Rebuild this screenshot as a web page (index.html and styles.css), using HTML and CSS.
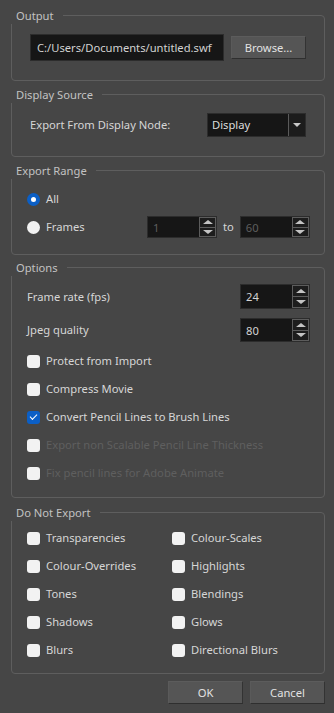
FILE: index.html
```html
<!DOCTYPE html>
<html>
<head>
<meta charset="utf-8">
<link rel="stylesheet" href="styles.css">
</head>
<body>
<div class="dialog">
  <section class="group g-output">
    <div class="title">Output</div>
    <div class="row">
      <div class="field path">C:/Users/Documents/untitled.swf</div>
      <div class="btn browse">Browse...</div>
    </div>
  </section>

  <section class="group g-source">
    <div class="title">Display Source</div>
    <div class="row between">
      <span class="label">Export From Display Node:</span>
      <div class="combo"><span class="combo-val">Display</span><span class="combo-arrow"></span></div>
    </div>
  </section>

  <section class="group g-range">
    <div class="title">Export Range</div>
    <div class="rrow">
      <span class="radio on"></span><span class="label">All</span>
    </div>
    <div class="rrow">
      <span class="radio"></span><span class="label frames-label">Frames</span>
      <div class="spin small disabled"><span class="spin-val">1</span><span class="spin-btns"><span class="sb up"></span><span class="sb down"></span></span></div>
      <span class="label to">to</span>
      <div class="spin small disabled"><span class="spin-val">60</span><span class="spin-btns"><span class="sb up"></span><span class="sb down"></span></span></div>
    </div>
  </section>

  <section class="group g-options">
    <div class="title">Options</div>
    <div class="orow r1">
      <span class="label">Frame rate (fps)</span>
      <div class="spin tall"><span class="spin-val">24</span><span class="spin-btns"><span class="sb up"></span><span class="sb down"></span></span></div>
    </div>
    <div class="orow r2">
      <span class="label">Jpeg quality</span>
      <div class="spin"><span class="spin-val">80</span><span class="spin-btns"><span class="sb up"></span><span class="sb down"></span></span></div>
    </div>
    <div class="checks">
      <div class="crow"><span class="cb"></span><span class="label">Protect from Import</span></div>
      <div class="crow"><span class="cb"></span><span class="label">Compress Movie</span></div>
      <div class="crow"><span class="cb on"></span><span class="label">Convert Pencil Lines to Brush Lines</span></div>
      <div class="crow dis"><span class="cb"></span><span class="label">Export non Scalable Pencil Line Thickness</span></div>
      <div class="crow dis"><span class="cb"></span><span class="label">Fix pencil lines for Adobe Animate</span></div>
    </div>
  </section>

  <section class="group g-dne">
    <div class="title">Do Not Export</div>
    <div class="grid">
      <div class="crow"><span class="cb"></span><span class="label">Transparencies</span></div>
      <div class="crow"><span class="cb"></span><span class="label">Colour-Scales</span></div>
      <div class="crow"><span class="cb"></span><span class="label">Colour-Overrides</span></div>
      <div class="crow"><span class="cb"></span><span class="label">Highlights</span></div>
      <div class="crow"><span class="cb"></span><span class="label">Tones</span></div>
      <div class="crow"><span class="cb"></span><span class="label">Blendings</span></div>
      <div class="crow"><span class="cb"></span><span class="label">Shadows</span></div>
      <div class="crow"><span class="cb"></span><span class="label">Glows</span></div>
      <div class="crow"><span class="cb"></span><span class="label">Blurs</span></div>
      <div class="crow"><span class="cb"></span><span class="label">Directional Blurs</span></div>
    </div>
  </section>

  <div class="buttons">
    <div class="btn">OK</div>
    <div class="btn">Cancel</div>
  </div>
</div>
</body>
</html>
```

FILE: styles.css
```css
html, body {
  margin: 0;
  padding: 0;
  background: #464646;
}
body {
  width: 334px;
  height: 713px;
  overflow: hidden;
  font-family: "Noto Sans", "Open Sans", sans-serif;
  font-size: 11.2px;
  color: #d6d6d6;
}
.dialog {
  padding: 15px 9px 0 11px;
  display: flex;
  flex-direction: column;
}
.group {
  position: relative;
  border: 1px solid #5e5e5e;
  border-radius: 4px;
}
.title {
  position: absolute;
  left: -1px;
  top: -7px;
  height: 15px;
  line-height: 14px;
  padding: 0 9px 0 5px;
  background: #464646;
  color: #c2c2c2;
}
.label {
  line-height: 16px;
  white-space: nowrap;
}
.row {
  display: flex;
  align-items: center;
}
.between {
  justify-content: space-between;
}

/* Output */
.g-output {
  padding: 18px 17px 19px 18px;
}
.field {
  background: #161616;
  border: 1px solid #2c2c2c;
  box-sizing: border-box;
}
.path {
  width: 194px;
  height: 27px;
  line-height: 25px;
  padding-left: 6px;
  color: #d2d2d2;
  white-space: nowrap;
  overflow: hidden;
}
.btn {
  box-sizing: border-box;
  width: 75px;
  height: 23px;
  line-height: 21px;
  text-align: center;
  background: #555555;
  border: 1px solid #3a3a3a;
  border-top-color: #5c5c5c;
  border-left-color: #5a5a5a;
  border-bottom-color: #2f2f2f;
  border-right-color: #333333;
  color: #e2e2e2;
}
.browse {
  margin-left: 7px;
}

/* Display source */
.g-source {
  margin-top: 13px;
  padding: 18px 18px 19px 18px;
}
.combo {
  display: flex;
  width: 99px;
  height: 24px;
  box-sizing: border-box;
  background: #161616;
  border: 1px solid #2c2c2c;
}
.combo-val {
  flex: 1;
  line-height: 22px;
  padding-left: 4px;
  color: #dcdcdc;
}
.combo-arrow {
  width: 16px;
  border-left: 1px solid #5a5a5a;
  background: #1c1c1c;
  display: flex;
  align-items: center;
  justify-content: center;
}
.combo-arrow::after {
  content: "";
  border-left: 4px solid transparent;
  border-right: 4px solid transparent;
  border-top: 4px solid #c8c8c8;
}

/* Export range */
.g-range {
  margin-top: 13px;
  padding: 17px 14px 16px 15px;
  display: flex;
  flex-direction: column;
  gap: 6px;
}
.rrow {
  display: flex;
  align-items: center;
  height: 22px;
}
.radio {
  width: 13px;
  height: 13px;
  border-radius: 50%;
  background: #f2f2f2;
  margin-right: 6px;
  flex: none;
  box-sizing: border-box;
}
.radio.on {
  background: #0b5fc6;
  border: 4px solid #0b5fc6;
  position: relative;
}
.radio.on::after {
  content: "";
  position: absolute;
  inset: 0;
  border-radius: 50%;
  background: #ffffff;
}
.frames-label {
  width: 101px;
}
.to {
  margin: 0 6px 0 6px;
}

/* spin boxes */
.spin {
  display: flex;
  width: 70px;
  height: 24px;
  box-sizing: border-box;
  background: #161616;
  border: 1px solid #2c2c2c;
}
.spin.tall {
  height: 25px;
}
.spin.small {
  height: 22px;
}
.spin-val {
  flex: 1;
  padding-left: 5px;
  display: flex;
  align-items: center;
  color: #d4d4d4;
}
.spin.disabled .spin-val {
  color: #5e5e5e;
}
.spin-btns {
  width: 17px;
  display: flex;
  flex-direction: column;
}
.sb {
  flex: 1;
  box-sizing: border-box;
  border: 1px solid #5c5c5c;
  background: #1d1d1d;
  display: flex;
  align-items: center;
  justify-content: center;
}
.sb.down {
  border-top: none;
}
.sb.up::after {
  content: "";
  border-left: 5px solid transparent;
  border-right: 5px solid transparent;
  border-bottom: 4px solid #c4c4c4;
}
.sb.down::after {
  content: "";
  border-left: 5px solid transparent;
  border-right: 5px solid transparent;
  border-top: 4px solid #c4c4c4;
}

/* Options */
.g-options {
  margin-top: 12px;
  padding: 16px 14px 10px 15px;
}
.orow {
  display: flex;
  align-items: center;
  justify-content: space-between;
}
.orow.r2 {
  margin-top: 9px;
}
.checks {
  margin-top: 5px;
}
.crow {
  display: flex;
  align-items: center;
  height: 28px;
}
.cb {
  width: 13px;
  height: 13px;
  border-radius: 3px;
  background: #f2f2f2;
  margin-right: 6px;
  flex: none;
  position: relative;
}
.cb.on {
  background: #0b5fc6;
}
.cb.on::after {
  content: "";
  position: absolute;
  left: 3px;
  top: 3px;
  width: 6px;
  height: 3px;
  border-left: 1px solid #ffffff;
  border-bottom: 1px solid #ffffff;
  transform: rotate(-45deg);
}
.crow.dis .label {
  color: #5f5f5f;
}

/* Do not export */
.g-dne {
  margin-top: 14px;
  padding: 11px 14px 9px 15px;
}
.grid {
  display: grid;
  grid-template-columns: 145px 1fr;
}

/* Buttons */
.buttons {
  margin-top: 7px;
  display: flex;
  justify-content: flex-end;
  gap: 7px;
}
```
